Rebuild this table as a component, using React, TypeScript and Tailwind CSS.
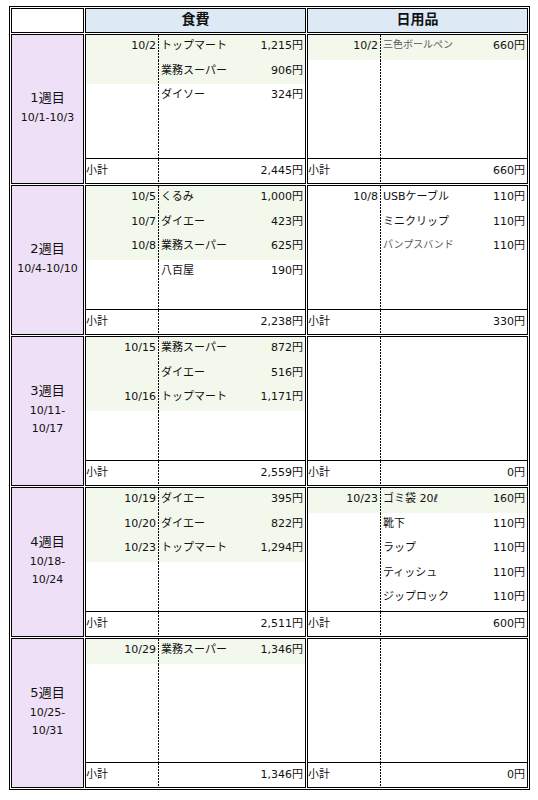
import React from "react";

type Item = { d?: string; n: string; a: string; g?: boolean; s?: boolean };
type Col = { items: Item[]; total: string };
type Week = { title: string; dates: string[]; food: Col; daily: Col };

const weeks: Week[] = [
  {
    title: "1週目",
    dates: ["10/1-10/3"],
    food: {
      items: [
        { d: "10/2", n: "トップマート", a: "1,215円", g: true },
        { n: "業務スーパー", a: "906円", g: true },
        { n: "ダイソー", a: "324円" },
      ],
      total: "2,445円",
    },
    daily: {
      items: [{ d: "10/2", n: "三色ボールペン", a: "660円", g: true, s: true }],
      total: "660円",
    },
  },
  {
    title: "2週目",
    dates: ["10/4-10/10"],
    food: {
      items: [
        { d: "10/5", n: "くるみ", a: "1,000円", g: true },
        { d: "10/7", n: "ダイエー", a: "423円", g: true },
        { d: "10/8", n: "業務スーパー", a: "625円", g: true },
        { n: "八百屋", a: "190円" },
      ],
      total: "2,238円",
    },
    daily: {
      items: [
        { d: "10/8", n: "USBケーブル", a: "110円" },
        { n: "ミニクリップ", a: "110円" },
        { n: "パンプスバンド", a: "110円", s: true },
      ],
      total: "330円",
    },
  },
  {
    title: "3週目",
    dates: ["10/11-", "10/17"],
    food: {
      items: [
        { d: "10/15", n: "業務スーパー", a: "872円", g: true },
        { n: "ダイエー", a: "516円", g: true },
        { d: "10/16", n: "トップマート", a: "1,171円", g: true },
      ],
      total: "2,559円",
    },
    daily: { items: [], total: "0円" },
  },
  {
    title: "4週目",
    dates: ["10/18-", "10/24"],
    food: {
      items: [
        { d: "10/19", n: "ダイエー", a: "395円", g: true },
        { d: "10/20", n: "ダイエー", a: "822円", g: true },
        { d: "10/23", n: "トップマート", a: "1,294円", g: true },
      ],
      total: "2,511円",
    },
    daily: {
      items: [
        { d: "10/23", n: "ゴミ袋 20ℓ", a: "160円", g: true },
        { n: "靴下", a: "110円" },
        { n: "ラップ", a: "110円" },
        { n: "ティッシュ", a: "110円" },
        { n: "ジップロック", a: "110円" },
      ],
      total: "600円",
    },
  },
  {
    title: "5週目",
    dates: ["10/25-", "10/31"],
    food: {
      items: [{ d: "10/29", n: "業務スーパー", a: "1,346円", g: true }],
      total: "1,346円",
    },
    daily: { items: [], total: "0円" },
  },
];

const dash =
  "bg-[image:repeating-linear-gradient(to_bottom,#000_0px,#000_2px,transparent_2px,transparent_3px)] bg-size-[1px_100%] bg-no-repeat bg-right";

function Row({ it }: { it?: Item }) {
  return (
    <div className={`grid grid-cols-[73px_1fr_auto] ${it && it.g ? "bg-[#f2f8ec]" : ""}`}>
      <div className={`${dash} pr-[3px] text-right leading-[21px]`}>{it?.d ?? ""}</div>
      <div
        className={`pl-[2px] whitespace-nowrap ${
          it?.s ? "text-[10px] leading-[19px] text-[#5a5a5a]" : "leading-[21px]"
        }`}
      >
        {it?.n ?? ""}
      </div>
      <div className="pr-[2px] text-right leading-[21px] whitespace-nowrap">{it?.a ?? ""}</div>
    </div>
  );
}

function ColCell({ col }: { col: Col }) {
  const rows: (Item | undefined)[] = [0, 1, 2, 3, 4].map((i) => col.items[i]);
  return (
    <div className="flex flex-col border border-black bg-white">
      <div className="grid flex-1 grid-rows-5">
        {rows.map((it, i) => (
          <Row key={i} it={it} />
        ))}
      </div>
      <div className="grid h-[25px] grid-cols-[73px_1fr] border-t border-black">
        <div className={`${dash} flex items-center whitespace-nowrap`}>小計</div>
        <div className="flex items-center justify-end pr-[2px]">{col.total}</div>
      </div>
    </div>
  );
}

export default function App() {
  return (
    <div className="min-h-[800px] bg-white pl-[9px] pt-[6px] font-['DejaVu_Sans','Noto_Sans_CJK_JP',sans-serif] text-[11px] text-[#111]">
      <div className="inline-grid grid-cols-[73px_221px_221px] grid-rows-[25px_repeat(5,150px)] gap-px border border-black p-px">
        <div className="border border-black bg-white" />
        <div className="flex items-center justify-center border border-black bg-[#dde9f5] pb-[3px] text-[14px] font-bold">
          食費
        </div>
        <div className="flex items-center justify-center border border-black bg-[#dde9f5] pb-[3px] text-[14px] font-bold">
          日用品
        </div>
        {weeks.map((w) => (
          <React.Fragment key={w.title}>
            <div className="flex flex-col items-center justify-center border border-black bg-[#eee1f7] pb-[5px] text-center">
              <div className="text-[13px] leading-[22px]">{w.title}</div>
              {w.dates.map((d) => (
                <div key={d} className="text-[11px] leading-[18px]">
                  {d}
                </div>
              ))}
            </div>
            <ColCell col={w.food} />
            <ColCell col={w.daily} />
          </React.Fragment>
        ))}
      </div>
    </div>
  );
}
